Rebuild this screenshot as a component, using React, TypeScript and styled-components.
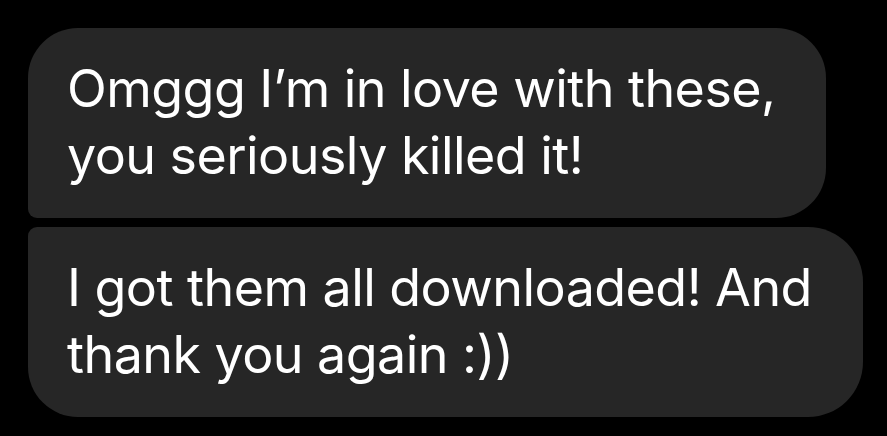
import React from "react";
import styled, { createGlobalStyle } from "styled-components";

const GlobalStyle = createGlobalStyle`
  html, body {
    margin: 0;
    padding: 0;
    background: #000000;
  }
  body {
    font-family: Inter, "Noto Sans", sans-serif;
  }
`;

const Thread = styled.div`
  display: flex;
  flex-direction: column;
  align-items: flex-start;
  gap: 9px;
  padding: 28px;
  min-height: 436px;
  box-sizing: border-box;
  background: #000000;
`;

type Position = "first" | "last";

const Bubble = styled.div<{ $position: Position }>`
  background: #262626;
  color: #ffffff;
  font-family: Inter, "Noto Sans", sans-serif;
  font-size: 52px;
  line-height: 67px;
  letter-spacing: -0.55px;
  padding: 27px 51px 29px 39px;
  white-space: pre;
  flex-shrink: 0;
  border-radius: ${({ $position }) =>
    $position === "first" ? "50px 50px 50px 9px" : "9px 55px 55px 50px"};
`;

export default function App() {
  return (
    <>
      <GlobalStyle />
      <Thread>
        <Bubble $position="first">
          {"Omggg I’m in love with these,\nyou seriously killed it!"}
        </Bubble>
        <Bubble $position="last">
          {"I got them all downloaded! And\nthank you again :))"}
        </Bubble>
      </Thread>
    </>
  );
}
